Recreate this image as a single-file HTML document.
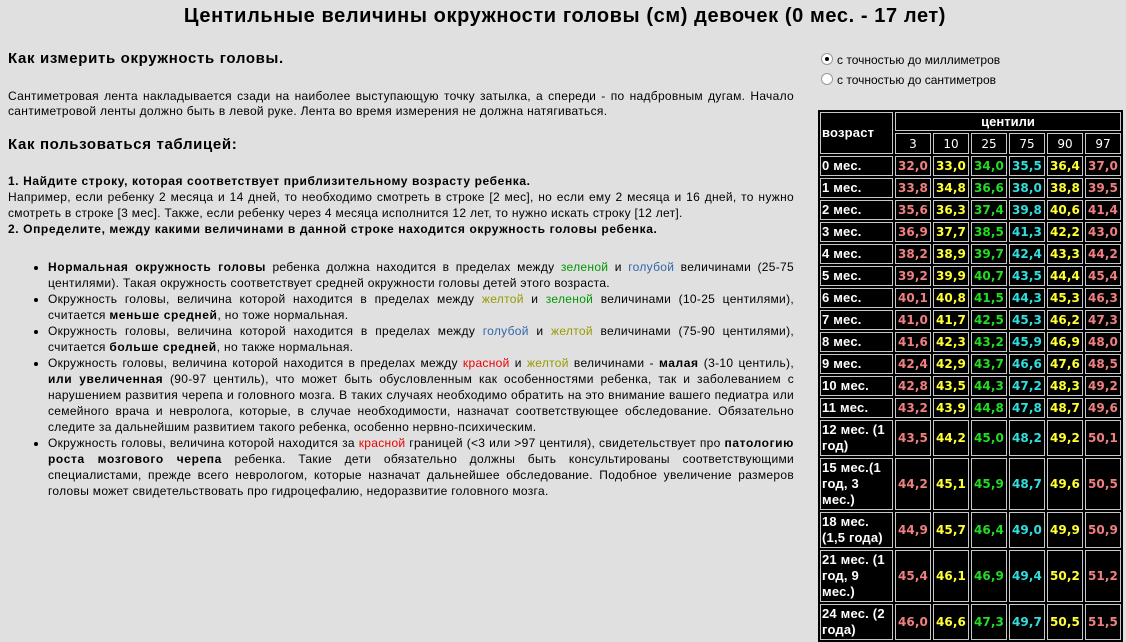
<!DOCTYPE html>
<html><head><meta charset="utf-8"><style>
html,body{margin:0;padding:0;background:#e0e0e0;width:1126px;height:640px;overflow:hidden;font-family:"Liberation Sans",Arial,sans-serif;color:#000}
h1{position:absolute;left:0;width:1130px;top:4px;margin:0;text-align:center;font-size:20px;line-height:24px;font-weight:bold;letter-spacing:0.6px}
#left{position:absolute;left:8px;top:49px;width:786px;font-size:12px;line-height:15px;text-align:justify;letter-spacing:0.3px}
#left b{letter-spacing:0.6px}
h2{font-size:15px;margin:0;line-height:20px;letter-spacing:0.65px}
p{margin:0}
ul{margin:0;padding-left:40px}
li{line-height:16px}
.g{color:#009900}.b{color:#3366aa}.y{color:#999900}.r{color:#ee0000}
#radios{position:absolute;left:821px;top:50px;font-size:12px;line-height:20px}
.rd{display:inline-block;width:10px;height:10px;border-radius:50%;background:#fff;border:1px solid #999;vertical-align:-1px;margin-right:4px;position:relative}
.rd.on:after{content:"";position:absolute;left:3px;top:3px;width:4px;height:4px;border-radius:50%;background:#000}
#tb{position:absolute;left:818px;top:110px;background:#000}
table{border-collapse:separate;border-spacing:2px;background:#000}
td{border:1px solid #c8c8c8;color:#fff;padding:0;font-weight:bold;height:18px}
td.l{width:70px;font-size:13px;line-height:16px;padding-left:1px;font-family:"Liberation Sans",Arial,sans-serif;letter-spacing:0.2px}
td.n{width:34px;text-align:center;font-family:"DejaVu Sans",Verdana,sans-serif;font-size:12px;letter-spacing:0.1px}
td.h{text-align:center;font-size:13px;font-family:"Liberation Sans",Arial,sans-serif;height:17px}
td.hn{font-weight:normal;font-family:"DejaVu Sans",sans-serif;font-size:12px;text-align:center;height:19px}
tr.t2 td{height:34px}
tr.t3 td{height:50px}
.c1{color:#f08080}.c2{color:#ffff33}.c3{color:#22dd22}.c4{color:#33dddd}
</style></head><body>
<h1>Центильные величины окружности головы (см) девочек (0 мес. - 17 лет)</h1>
<div id="left">
<h2>Как измерить окружность головы.</h2>
<p style="margin-top:20px">Сантиметровая лента накладывается сзади на наиболее выступающую точку затылка, а спереди - по надбровным дугам. Начало сантиметровой ленты должно быть в левой руке. Лента во время измерения не должна натягиваться.</p>
<h2 style="margin-top:16px">Как пользоваться таблицей:</h2>
<p style="margin-top:18px;line-height:16px"><b>1. Найдите строку, которая соответствует приблизительному возрасту ребенка.</b><br>Например, если ребенку 2 месяца и 14 дней, то необходимо смотреть в строке [2 мес], но если ему 2 месяца и 16 дней, то нужно смотреть в строке [3 мес]. Также, если ребенку через 4 месяца исполнится 12 лет, то нужно искать строку [12 лет].<br><b>2. Определите, между какими величинами в данной строке находится окружность головы ребенка.</b></p>
<ul style="margin-top:22px">
<li><b>Нормальная окружность головы</b> ребенка должна находится в пределах между <span class="g">зеленой</span> и <span class="b">голубой</span> величинами (25-75 центилями). Такая окружность соответствует средней окружности головы детей этого возраста.</li>
<li>Окружность головы, величина которой находится в пределах между <span class="y">желтой</span> и <span class="g">зеленой</span> величинами (10-25 центилями), считается <b>меньше средней</b>, но тоже нормальная.</li>
<li>Окружность головы, величина которой находится в пределах между <span class="b">голубой</span> и <span class="y">желтой</span> величинами (75-90 центилями), считается <b>больше средней</b>, но также нормальная.</li>
<li>Окружность головы, величина которой находится в пределах между <span class="r">красной</span> и <span class="y">желтой</span> величинами - <b>малая</b> (3-10 центиль), <b>или увеличенная</b> (90-97 центиль), что может быть обусловленным как особенностями ребенка, так и заболеванием с нарушением развития черепа и головного мозга. В таких случаях необходимо обратить на это внимание вашего педиатра или семейного врача и невролога, которые, в случае необходимости, назначат соответствующее обследование. Обязательно следите за дальнейшим развитием такого ребенка, особенно нервно-психическим.</li>
<li>Окружность головы, величина которой находится за <span class="r">красной</span> границей (&lt;3 или &gt;97 центиля), свидетельствует про <b>патологию роста мозгового черепа</b> ребенка. Такие дети обязательно должны быть консультированы соответствующими специалистами, прежде всего неврологом, которые назначат дальнейшее обследование. Подобное увеличение размеров головы может свидетельствовать про гидроцефалию, недоразвитие головного мозга.</li>
</ul>
</div>
<div id="radios"><div><span class="rd on"></span>с точностью до миллиметров</div><div><span class="rd"></span>с точностью до сантиметров</div></div>
<div id="tb"><table>
<tr><td class="l" rowspan="2">возраст</td><td class="h" colspan="6">центили</td></tr>
<tr><td class="hn">3</td><td class="hn">10</td><td class="hn">25</td><td class="hn">75</td><td class="hn">90</td><td class="hn">97</td></tr>
<tr><td class="l">0 мес.</td><td class="n c1">32,0</td><td class="n c2">33,0</td><td class="n c3">34,0</td><td class="n c4">35,5</td><td class="n c2">36,4</td><td class="n c1">37,0</td></tr>
<tr><td class="l">1 мес.</td><td class="n c1">33,8</td><td class="n c2">34,8</td><td class="n c3">36,6</td><td class="n c4">38,0</td><td class="n c2">38,8</td><td class="n c1">39,5</td></tr>
<tr><td class="l">2 мес.</td><td class="n c1">35,6</td><td class="n c2">36,3</td><td class="n c3">37,4</td><td class="n c4">39,8</td><td class="n c2">40,6</td><td class="n c1">41,4</td></tr>
<tr><td class="l">3 мес.</td><td class="n c1">36,9</td><td class="n c2">37,7</td><td class="n c3">38,5</td><td class="n c4">41,3</td><td class="n c2">42,2</td><td class="n c1">43,0</td></tr>
<tr><td class="l">4 мес.</td><td class="n c1">38,2</td><td class="n c2">38,9</td><td class="n c3">39,7</td><td class="n c4">42,4</td><td class="n c2">43,3</td><td class="n c1">44,2</td></tr>
<tr><td class="l">5 мес.</td><td class="n c1">39,2</td><td class="n c2">39,9</td><td class="n c3">40,7</td><td class="n c4">43,5</td><td class="n c2">44,4</td><td class="n c1">45,4</td></tr>
<tr><td class="l">6 мес.</td><td class="n c1">40,1</td><td class="n c2">40,8</td><td class="n c3">41,5</td><td class="n c4">44,3</td><td class="n c2">45,3</td><td class="n c1">46,3</td></tr>
<tr><td class="l">7 мес.</td><td class="n c1">41,0</td><td class="n c2">41,7</td><td class="n c3">42,5</td><td class="n c4">45,3</td><td class="n c2">46,2</td><td class="n c1">47,3</td></tr>
<tr><td class="l">8 мес.</td><td class="n c1">41,6</td><td class="n c2">42,3</td><td class="n c3">43,2</td><td class="n c4">45,9</td><td class="n c2">46,9</td><td class="n c1">48,0</td></tr>
<tr><td class="l">9 мес.</td><td class="n c1">42,4</td><td class="n c2">42,9</td><td class="n c3">43,7</td><td class="n c4">46,6</td><td class="n c2">47,6</td><td class="n c1">48,5</td></tr>
<tr><td class="l">10 мес.</td><td class="n c1">42,8</td><td class="n c2">43,5</td><td class="n c3">44,3</td><td class="n c4">47,2</td><td class="n c2">48,3</td><td class="n c1">49,2</td></tr>
<tr><td class="l">11 мес.</td><td class="n c1">43,2</td><td class="n c2">43,9</td><td class="n c3">44,8</td><td class="n c4">47,8</td><td class="n c2">48,7</td><td class="n c1">49,6</td></tr>
<tr class="t2"><td class="l">12 мес. (1<br>год)</td><td class="n c1">43,5</td><td class="n c2">44,2</td><td class="n c3">45,0</td><td class="n c4">48,2</td><td class="n c2">49,2</td><td class="n c1">50,1</td></tr>
<tr class="t3"><td class="l">15 мес.(1<br>год, 3<br>мес.)</td><td class="n c1">44,2</td><td class="n c2">45,1</td><td class="n c3">45,9</td><td class="n c4">48,7</td><td class="n c2">49,6</td><td class="n c1">50,5</td></tr>
<tr class="t2"><td class="l">18 мес.<br>(1,5 года)</td><td class="n c1">44,9</td><td class="n c2">45,7</td><td class="n c3">46,4</td><td class="n c4">49,0</td><td class="n c2">49,9</td><td class="n c1">50,9</td></tr>
<tr class="t3"><td class="l">21 мес. (1<br>год, 9<br>мес.)</td><td class="n c1">45,4</td><td class="n c2">46,1</td><td class="n c3">46,9</td><td class="n c4">49,4</td><td class="n c2">50,2</td><td class="n c1">51,2</td></tr>
<tr class="t2"><td class="l">24 мес. (2<br>года)</td><td class="n c1">46,0</td><td class="n c2">46,6</td><td class="n c3">47,3</td><td class="n c4">49,7</td><td class="n c2">50,5</td><td class="n c1">51,5</td></tr>
</table></div>
</body></html>
